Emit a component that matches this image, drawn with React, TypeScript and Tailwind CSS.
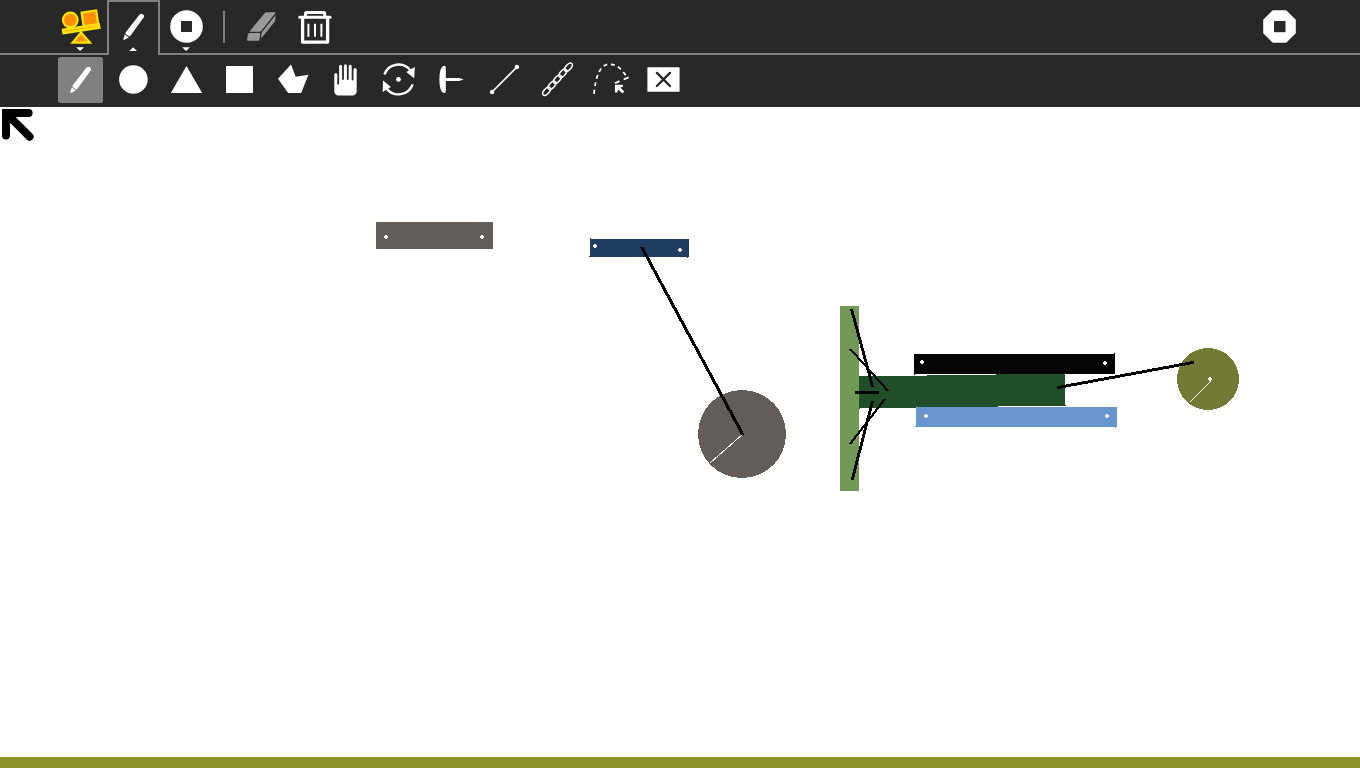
import type { ReactNode } from "react";

const DARK = "#282828";

/* One toolbar cell: the viewBox uses window coordinates, so x is the cell's left edge. */
function Glyph({ x, y, h, children }: { x: number; y: number; h: number; children: ReactNode }) {
  return (
    <svg className="block" width={53} height={h} viewBox={`${x} ${y} 53 ${h}`} fill="white">
      {children}
    </svg>
  );
}

function Top({ label, x, children }: { label: string; x: number; children: ReactNode }) {
  return (
    <button aria-label={label} className="block h-[53px] w-[53px] shrink-0">
      <Glyph x={x} y={0} h={53}>{children}</Glyph>
    </button>
  );
}

function Tool({ label, x, children }: { label: string; x: number; children: ReactNode }) {
  return (
    <button aria-label={label} className="block h-[52px] w-[53px] shrink-0">
      <Glyph x={x} y={55} h={52}>{children}</Glyph>
    </button>
  );
}

function Pencil() {
  return (
    <g>
      <path d="M139.6 14.6Q140.6 13.3 142.2 13.9L143.4 14.7Q144.7 15.9 143.8 17.3L130.4 35.8Q129.6 36.7 128.6 36L125.8 33.9Q125 33.2 125.6 32.4Z" />
      <path d="M124.9 34.3L128.9 37.4L125.4 39.2L123.9 40L123.3 39.6L123.6 38Z" />
    </g>
  );
}

function Arm({ points, width }: { points: [number, number, number, number]; width: number }) {
  const [x1, y1, x2, y2] = points;
  const steep = Math.abs(y2 - y1) > Math.abs(x2 - x1);
  const a = steep ? width / 2 : 0;
  const b = steep ? 0 : width / 2;
  return (
    <polygon
      fill="#000"
      points={`${x1 - a},${y1 - b} ${x1 + a},${y1 + b} ${x2 + a},${y2 + b} ${x2 - a},${y2 - b}`}
    />
  );
}

function Hole({ x, y }: { x: number; y: number }) {
  return <path fill="#fff" d={`M${x - 1} ${y - 2}h2v1h1v2h-1v1h-2v-1h-1v-2h1z`} />;
}

function World() {
  return (
    <svg className="block h-[650px] w-full" viewBox="0 107 1360 650" shapeRendering="crispEdges">
      <rect x="376" y="222" width="117" height="27" fill="#625d59" />
      <Hole x={386} y={237} />
      <Hole x={482} y={237} />

      <path fill="#203c60" d="M590 238h1v1h98v18h-1v1h-1v-1h-98v-1h1z" />
      <Hole x={595} y={246} />
      <Hole x={680} y={250} />

      <circle cx="742" cy="434" r="44" fill="#625d59" />
      <line x1="743" y1="434" x2="710" y2="463" stroke="#fff" strokeWidth="1" />
      <Arm points={[641.6, 247, 743, 435]} width={3.5} />

      <rect x="840" y="306" width="19" height="185" fill="#729a57" />
      <path
        fill="#1f4e29"
        d="M859 376h68v-1h69v-1h69v31h1v1h-68v1h-82v1h-56v1h-1z"
      />

      <path fill="#040404" d="M914 354h200v-1h1v21h-200v1h-1z" />
      <Hole x={922} y={362} />
      <Hole x={1105} y={363} />

      <path fill="#6796cf" d="M916 406h1v1h200v20h-1v1h-1v-1h-200v-1h1z" />
      <Hole x={926} y={416} />
      <Hole x={1107} y={416} />

      <Arm points={[851.5, 309, 872.7, 387]} width={3} />
      <Arm points={[850.6, 349.3, 888.4, 391.3]} width={2.8} />
      <Arm points={[855, 392.5, 879, 392.5]} width={3} />
      <Arm points={[885, 399, 850, 444]} width={2.8} />
      <Arm points={[872.5, 401, 852.2, 480]} width={3} />

      <circle cx="1208" cy="379" r="31" fill="#737a35" />
      <line x1="1210.3" y1="380.5" x2="1189" y2="401.8" stroke="#fff" strokeWidth="0.9" />
      <Hole x={1210} y={379} />
      <Arm points={[1057, 387.7, 1194, 362.3]} width={3} />

      <g shapeRendering="geometricPrecision">
        <path d="M2 109H28.6a4 4 0 0 1 0 8H15.6L32.4 133.7a4 4 0 0 1 -5.7 5.8L10 122.8V135.4a4 4 0 0 1 -8 0Z" />
      </g>
    </svg>
  );
}

const CHAIN_LINKS = [
  [546.6, 91.2],
  [552, 85.2],
  [557.4, 79.2],
  [562.8, 73.2],
  [568.4, 67.2],
];

export default function App() {
  return (
    <div className="flex h-screen w-full flex-col overflow-hidden bg-white">
      <header className="shrink-0 bg-[#282828]">
        <div className="flex h-[55px] border-b-2 border-[#808080] pr-[54px] pl-[54px]">
          <Top label="Activity" x={54}>
            <g fill="#ff8f00" stroke="#ffe500" strokeWidth="2.2">
              <path d="M81 32.5L72.6 42.7H90Z" />
              <circle cx="70.3" cy="20" r="7.3" />
              <path d="M81.6 12.6L96.2 10.5L98.2 24.2L83.7 26.4Z" />
              <path d="M63.1 29.8L98.8 24.5L99.3 27.6L63.6 33.1Z" strokeWidth="2.5" />
            </g>
            <path d="M76.2 47.2H84L80.1 51Z" />
          </Top>
          <div className="z-10 -mb-0.5 h-[55px] w-[53px] shrink-0 border-x-2 border-t-2 border-[#808080] bg-[#282828]">
            <button aria-label="Draw" className="-mt-0.5 -ml-0.5 block h-[53px] w-[53px]">
              <Glyph x={107} y={0} h={53}>
                <Pencil />
                <path d="M129.2 51H137L133.1 47.2Z" />
              </Glyph>
            </button>
          </div>
          <Top label="Stop simulation" x={160}>
            <circle cx="186.5" cy="26.5" r="16.3" />
            <rect x="181" y="21" width="11" height="11" fill={DARK} />
            <path d="M182.1 47.2H190L186 51Z" />
          </Top>
          <div className="flex w-[22px] shrink-0 items-center justify-center">
            <div className="h-8 w-0.5 bg-[#808080]" />
          </div>
          <Top label="Erase" x={235}>
            <g fill="#999">
              <path d="M264.8 12.9Q265.4 12.3 266.2 12.3H275Q275.8 12.4 275.3 13.2L261.2 31Q260.5 31.8 259.5 31.8H250.2Q249.5 31.6 250 30.9Z" />
              <path d="M249.6 33H259Q260.3 33 260.2 34.2L259.5 39.4Q259.2 40.7 258 40.7H248Q246.9 40.6 247 39.5L248 34.5Q248.3 33.1 249.6 33Z" />
              <path d="M275.8 15.1L275.1 20.3Q275 21.2 274.4 22L262.2 37.3Q260.9 38.8 261 37.4L261.7 33.1Q261.8 32.3 262.4 31.6Z" />
            </g>
          </Top>
          <Top label="Erase all" x={288}>
            <g fill="none" stroke="white">
              <path d="M305.5 17V13.4Q305.5 12.4 306.6 12.4H323.6Q324.7 12.4 324.7 13.4V17" strokeWidth="3" />
              <path d="M299.8 18.6V17.2H330V18.6" strokeWidth="3" strokeLinejoin="round" />
              <path d="M302.6 17.4V42.1H327.6V17.4" strokeWidth="3.3" strokeLinejoin="round" />
              <path d="M308.4 23.7V36.8M315 23.7V36.8M321.4 23.7V36.8" strokeWidth="2" />
            </g>
          </Top>
          <div className="flex-1" />
          <Top label="Quit" x={1253}>
            <path d="M1272.8 10.2H1286.2L1295.8 19.8V33.2L1286.2 42.8H1272.8L1263.2 33.2V19.8Z" />
            <rect x="1274" y="21" width="11.5" height="11.2" fill={DARK} />
          </Top>
        </div>

        <div className="flex h-[52px] pl-[54px]">
          <Tool label="Pencil" x={54}>
            <rect x="58" y="57" width="45" height="46" rx="2.5" fill="#808080" />
            <g transform="translate(-53 53)"><Pencil /></g>
          </Tool>
          <Tool label="Circle" x={107}>
            <circle cx="133.4" cy="79.5" r="14.3" />
          </Tool>
          <Tool label="Triangle" x={160}>
            <path d="M186.5 66L202.2 93H170.8Z" />
          </Tool>
          <Tool label="Box" x={213}>
            <rect x="226" y="66" width="27" height="27" />
          </Tool>
          <Tool label="Polygon" x={266}>
            <path d="M291 64.6L295.7 76.7L308.4 74.7L301.2 93H288.2L278 78.7Z" />
          </Tool>
          <Tool label="Grab" x={319}>
            <path d="M334.3 74.6a1.5 1.5 0 0 1 3 0V83.7a.9 .9 0 0 0 1.8 0V66.3a1.5 1.5 0 0 1 3 0V79a.9 .9 0 0 0 1.8 0V65.8a1.5 1.5 0 0 1 3 0V79a.9 .9 0 0 0 1.8 0V66.3a1.5 1.5 0 0 1 3 0V79.5a.9 .9 0 0 0 1.8 0V69.7a1.6 1.6 0 0 1 3.2 0V91.2a4.3 4.3 0 0 1 -4.3 4.3H338.6a4.3 4.3 0 0 1 -4.3 -4.3Z" />
          </Tool>
          <Tool label="Motor" x={372}>
            <circle cx="398.5" cy="79.4" r="2.4" />
            <g fill="none" stroke="white" strokeWidth="2.4">
              <path d="M384.4 74.5A15 15 0 0 1 410.5 70.6" />
              <path d="M412.6 84.3A15 15 0 0 1 386.5 88.4" />
            </g>
            <path d="M414.8 66.9L406.3 71.9L414.2 78.3Z" />
            <path d="M382.7 91.9L390.9 87L383 80.6Z" />
          </Tool>
          <Tool label="Pin" x={425}>
            <path d="M444 65.7Q445.8 65.6 445.8 67.5V77.9H459L463.8 79.5L459 81.1H445.8V91.5Q445.8 93.2 444 93.1Q439.4 92 439.4 79.4Q439.4 67 444 65.7Z" />
          </Tool>
          <Tool label="Joint" x={478}>
            <path d="M492 92L517 67" stroke="white" strokeWidth="1.7" />
            <circle cx="492.1" cy="92" r="2.2" />
            <circle cx="516.9" cy="67" r="2.2" />
          </Tool>
          <Tool label="Chain" x={531}>
            <g fill="none" stroke="white" strokeWidth="1.5">
              {CHAIN_LINKS.map(([cx, cy]) => (
                <ellipse
                  key={cx}
                  rx="5"
                  ry="2.6"
                  transform={`translate(${cx} ${cy}) rotate(-48)`}
                />
              ))}
            </g>
          </Tool>
          <Tool label="Track" x={584}>
            <g fill="none" stroke="white" strokeWidth="1.8">
              <path d="M594 93.8C595.5 78 599.5 64.3 609.5 64.2C617 64.3 622 69.5 626.3 76.2" strokeDasharray="4 3.5" />
              <path d="M628.7 77.3L623.7 79.3M619.5 81.1L615 83.2" />
            </g>
            <path d="M615 84.8H623V86.8L620.3 87.6L624.3 91.5L622.5 93.5L618.2 89.4L617.2 92.6H615Z" />
          </Tool>
          <Tool label="Destroy" x={637}>
            <rect x="647.4" y="67.3" width="32.2" height="24.5" rx="0.5" />
            <path d="M656.9 72.9L670 86M670 72.9L656.9 86" stroke={DARK} strokeWidth="2.4" strokeLinecap="round" />
          </Tool>
        </div>
      </header>
      <main className="flex flex-1 flex-col">
        <World />
        <div className="flex-1 bg-[#8d942c]" />
      </main>
    </div>
  );
}
